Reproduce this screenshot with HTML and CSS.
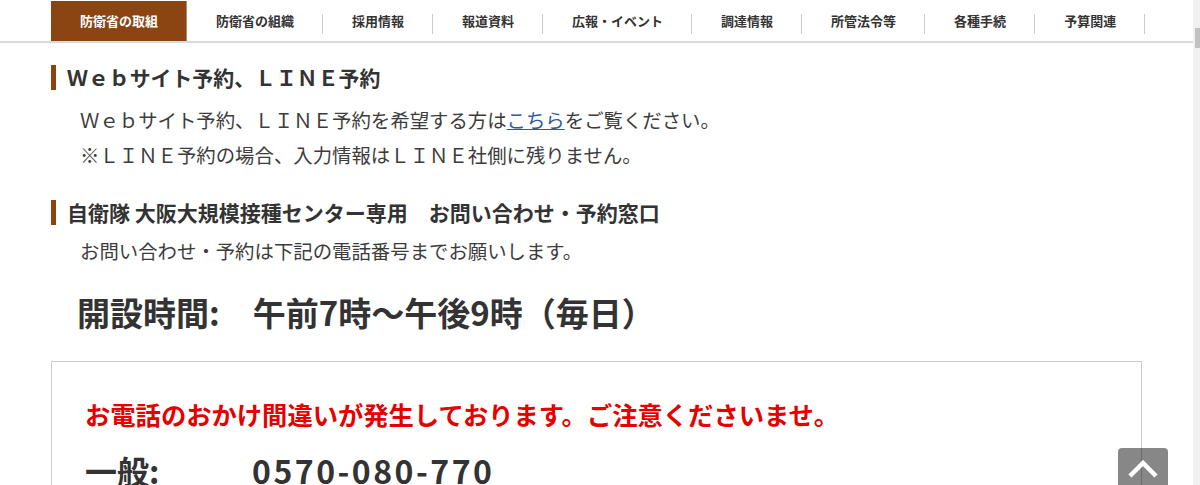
FILE: index.html
```html
<!DOCTYPE html>
<html lang="ja">
<head>
    <meta charset="UTF-8">
    <meta name="viewport" content="width=device-width, initial-scale=1.0">
    <title>自衛隊 大阪大規模接種センター</title>
    <link rel="stylesheet" href="styles.css">
</head>
<body>
    <div class="page">
        <header class="gnav">
            <ul class="gnav-list">
                <li class="gnav-item active">防衛省の取組</li>
                <li class="gnav-item">防衛省の組織</li>
                <li class="gnav-item">採用情報</li>
                <li class="gnav-item">報道資料</li>
                <li class="gnav-item">広報・イベント</li>
                <li class="gnav-item">調達情報</li>
                <li class="gnav-item">所管法令等</li>
                <li class="gnav-item">各種手続</li>
                <li class="gnav-item">予算関連</li>
            </ul>
        </header>

        <main class="container">
            <h2 class="title">Ｗｅｂサイト予約、ＬＩＮＥ予約</h2>
            <p class="text first">Ｗｅｂサイト予約、ＬＩＮＥ予約を希望する方は<a href="#">こちら</a>をご覧ください。<br>※ＬＩＮＥ予約の場合、入力情報はＬＩＮＥ社側に残りません。</p>

            <h2 class="title second">自衛隊 大阪大規模接種センター専用　お問い合わせ・予約窓口</h2>
            <p class="text">お問い合わせ・予約は下記の電話番号までお願いします。</p>

            <p class="hours">開設時間:　午前7時～午後9時（毎日）</p>

            <div class="tel-box">
                <p class="caution">お電話のおかけ間違いが発生しております。ご注意くださいませ。</p>
                <div class="tel-row">
                    <span class="tel-label">一般:</span>
                    <span class="tel-number">0570-080-770</span>
                </div>
            </div>
        </main>
    </div>

    <a class="pagetop" href="#">
        <svg width="30" height="18" viewBox="0 0 30 18">
            <polyline points="2,16 15,3 28,16" fill="none" stroke="#fff" stroke-width="4.5"/>
        </svg>
    </a>

    <div class="scrollbar"><div class="scrollbar-thumb"></div></div>
</body>
</html>
```

FILE: styles.css
```css
html, body {
    margin: 0;
    padding: 0;
    background-color: #ffffff;
}
body {
    font-family: "Noto Sans CJK JP", "Noto Sans", sans-serif;
    color: #333333;
    overflow: hidden;
}
.page {
    margin-right: 7px;
}
.gnav {
    padding-top: 1px;
    border-bottom: 2px solid #dadada;
}
.gnav-list {
    display: flex;
    width: 1091px;
    margin: 0 auto;
    padding: 0;
    list-style: none;
}
.gnav-item {
    position: relative;
    height: 40px;
    line-height: 40px;
    padding: 0 29px;
    font-size: 13px;
    font-weight: bold;
    color: #333333;
    white-space: nowrap;
}
.gnav-item::after {
    content: "";
    position: absolute;
    right: 0;
    top: 13px;
    height: 20px;
    border-right: 1px solid #cccccc;
}
.gnav-item.active {
    background-color: #8b4513;
    color: #ffffff;
}
.gnav-item.active::after {
    border-color: #b08a70;
    top: 0;
    height: 40px;
}
.container {
    width: 1091px;
    margin: 0 auto;
}
.title {
    margin: 22px 0 0;
    padding-left: 11px;
    border-left: 5px solid #8b4513;
    font-size: 20.9px;
    line-height: 25px;
    font-weight: bold;
    color: #333333;
}
.title.second {
    margin-top: 28px;
}
.title.second {
    font-size: 21px;
}
.text {
    margin: 8px 0 0 29px;
    font-size: 19.4px;
    line-height: 35px;
    color: #3c3c3c;
}
.text.first {
    margin-top: 12px;
}
.text a {
    color: #2f58a8;
    text-decoration: underline;
}
.hours {
    margin: 24px 0 0 26px;
    font-size: 33px;
    line-height: 40px;
    font-weight: bold;
    color: #333333;
}
.tel-box {
    margin-top: 29px;
    padding: 34px 33px 20px;
    border: 1px solid #cccccc;
}
.caution {
    margin: 0;
    font-size: 25.3px;
    line-height: 36px;
    font-weight: bold;
    color: #e60000;
}
.tel-row {
    display: flex;
    margin-top: 16px;
    font-size: 32px;
    line-height: 44px;
    font-weight: bold;
    color: #333333;
}
.tel-label {
    width: 167px;
}
.tel-number {
    letter-spacing: 2.5px;
}
.pagetop {
    position: fixed;
    left: 1118px;
    top: 448px;
    width: 50px;
    height: 50px;
    border-radius: 4px;
    background-color: rgba(0, 0, 0, 0.47);
    display: flex;
    justify-content: center;
    padding-top: 12px;
    box-sizing: border-box;
}
.scrollbar {
    position: fixed;
    top: 0;
    right: 0;
    width: 7px;
    height: 100%;
    background-color: #f1f1f1;
}
.scrollbar-thumb {
    margin: 28px 0 0 2px;
    width: 5px;
    height: 20px;
    background-color: #c1c1c1;
}
```
